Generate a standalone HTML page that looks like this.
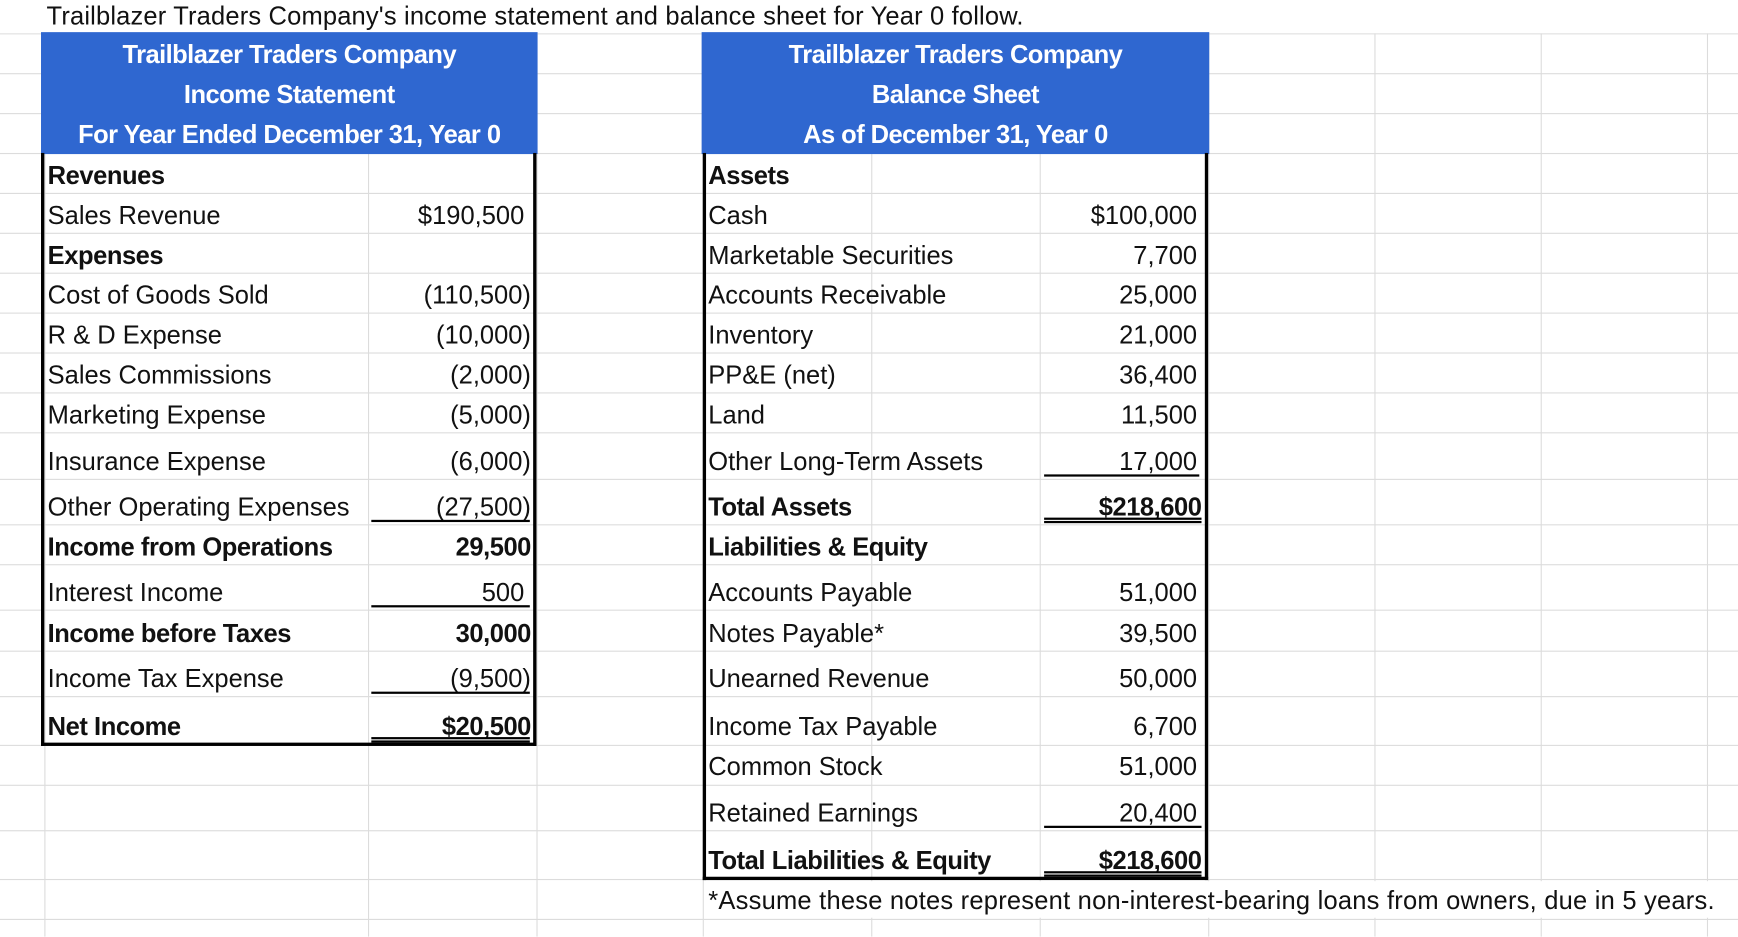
<!DOCTYPE html>
<html><head><meta charset="utf-8"><style>
html,body{margin:0;padding:0;background:#fff;overflow:hidden;width:1738px;height:936px}
#w{position:absolute;left:0;top:0;width:1568px;height:845px;transform:scale(1.1084);transform-origin:0 0;font-family:"Liberation Sans Narrow","Liberation Sans",sans-serif;font-size:23px;color:#111}
.v{position:absolute;top:0;height:845px;width:1px;background:#dcdcdc}
.h{position:absolute;left:0;width:1568px;height:1px;background:#dcdcdc}
.t{position:absolute;white-space:nowrap;line-height:26px}
.r{text-align:right}
.b{font-weight:bold;letter-spacing:-0.4px}
.blue{position:absolute;background:#2F67D0}
.ht{position:absolute;color:#fff;font-weight:bold;text-align:center;line-height:26px;white-space:nowrap;letter-spacing:-0.5px}
.k{position:absolute;background:#000}
.u{position:absolute;height:1.5px;background:#000}
</style></head><body><div id="w">
<div class="v" style="left:40px"></div><div class="v" style="left:332px"></div><div class="v" style="left:484px"></div><div class="v" style="left:634px"></div><div class="v" style="left:786px"></div><div class="v" style="left:938px"></div><div class="v" style="left:1090px"></div><div class="v" style="left:1240px"></div><div class="v" style="left:1390px"></div><div class="v" style="left:1540px"></div>
<div class="h" style="top:30px"></div><div class="h" style="top:66px"></div><div class="h" style="top:102px"></div><div class="h" style="top:138px"></div><div class="h" style="top:174px"></div><div class="h" style="top:210px"></div><div class="h" style="top:246px"></div><div class="h" style="top:282px"></div><div class="h" style="top:318px"></div><div class="h" style="top:354px"></div><div class="h" style="top:390px"></div><div class="h" style="top:432px"></div><div class="h" style="top:473px"></div><div class="h" style="top:509px"></div><div class="h" style="top:550px"></div><div class="h" style="top:587px"></div><div class="h" style="top:628px"></div><div class="h" style="top:672px"></div><div class="h" style="top:708px"></div><div class="h" style="top:749px"></div><div class="h" style="top:793px"></div><div class="h" style="top:829px"></div>
<div style="position:absolute;left:0;top:0;width:1568px;height:30px;background:#fff"></div>
<div class="t" style="left:42px;top:1px;letter-spacing:0.15px">Trailblazer Traders Company's income statement and balance sheet for Year 0 follow.</div>
<div class="blue" style="left:37px;top:29px;width:448px;height:110px"></div>
<div class="blue" style="left:633px;top:29px;width:458px;height:110px"></div>
<div class="ht" style="left:37px;width:448px;top:36px">Trailblazer Traders Company</div>
<div class="ht" style="left:37px;width:448px;top:72px">Income Statement</div>
<div class="ht" style="left:37px;width:448px;top:108px">For Year Ended December 31, Year 0</div>
<div class="ht" style="left:633px;width:458px;top:36px">Trailblazer Traders Company</div>
<div class="ht" style="left:633px;width:458px;top:72px">Balance Sheet</div>
<div class="ht" style="left:633px;width:458px;top:108px">As of December 31, Year 0</div>
<div class="k" style="left:37px;top:138px;width:3px;height:535px"></div>
<div class="k" style="left:481px;top:138px;width:3px;height:535px"></div>
<div class="k" style="left:37px;top:670px;width:447px;height:3px"></div>
<div class="k" style="left:634px;top:138px;width:3px;height:656px"></div>
<div class="k" style="left:1087px;top:138px;width:3px;height:656px"></div>
<div class="k" style="left:634px;top:791px;width:456px;height:3px"></div>
<div class="t b" style="left:43px;top:145px">Revenues</div>
<div class="t" style="left:43px;top:181px">Sales Revenue</div><div class="t r" style="right:1095px;top:181px">$190,500</div>
<div class="t b" style="left:43px;top:217px">Expenses</div>
<div class="t" style="left:43px;top:253px">Cost of Goods Sold</div><div class="t r" style="right:1089px;top:253px">(110,500)</div>
<div class="t" style="left:43px;top:289px">R &amp; D Expense</div><div class="t r" style="right:1089px;top:289px">(10,000)</div>
<div class="t" style="left:43px;top:325px">Sales Commissions</div><div class="t r" style="right:1089px;top:325px">(2,000)</div>
<div class="t" style="left:43px;top:361px">Marketing Expense</div><div class="t r" style="right:1089px;top:361px">(5,000)</div>
<div class="t" style="left:43px;top:403px">Insurance Expense</div><div class="t r" style="right:1089px;top:403px">(6,000)</div>
<div class="t" style="left:43px;top:444px">Other Operating Expenses</div><div class="t r" style="right:1089px;top:444px">(27,500)</div>
<div class="u" style="left:335px;top:469px;width:143px"></div>
<div class="t b" style="left:43px;top:480px">Income from Operations</div><div class="t r b" style="right:1089px;top:480px">29,500</div>
<div class="t" style="left:43px;top:521px">Interest Income</div><div class="t r" style="right:1095px;top:521px">500</div>
<div class="u" style="left:335px;top:546px;width:143px"></div>
<div class="t b" style="left:43px;top:558px">Income before Taxes</div><div class="t r b" style="right:1089px;top:558px">30,000</div>
<div class="t" style="left:43px;top:599px">Income Tax Expense</div><div class="t r" style="right:1089px;top:599px">(9,500)</div>
<div class="u" style="left:335px;top:624px;width:143px"></div>
<div class="t b" style="left:43px;top:642px">Net Income</div><div class="t r b" style="right:1089px;top:642px">$20,500</div>
<div class="u" style="left:335px;top:665px;width:143px"></div><div class="u" style="left:335px;top:668px;width:143px"></div>
<div class="t b" style="left:639px;top:145px">Assets</div>
<div class="t" style="left:639px;top:181px">Cash</div><div class="t r" style="right:488px;top:181px">$100,000</div>
<div class="t" style="left:639px;top:217px">Marketable Securities</div><div class="t r" style="right:488px;top:217px">7,700</div>
<div class="t" style="left:639px;top:253px">Accounts Receivable</div><div class="t r" style="right:488px;top:253px">25,000</div>
<div class="t" style="left:639px;top:289px">Inventory</div><div class="t r" style="right:488px;top:289px">21,000</div>
<div class="t" style="left:639px;top:325px">PP&amp;E (net)</div><div class="t r" style="right:488px;top:325px">36,400</div>
<div class="t" style="left:639px;top:361px">Land</div><div class="t r" style="right:488px;top:361px">11,500</div>
<div class="t" style="left:639px;top:403px">Other Long-Term Assets</div><div class="t r" style="right:488px;top:403px">17,000</div>
<div class="u" style="left:942px;top:428px;width:140px"></div>
<div class="t b" style="left:639px;top:444px">Total Assets</div><div class="t r b" style="right:484px;top:444px">$218,600</div>
<div class="u" style="left:942px;top:467px;width:142px"></div><div class="u" style="left:942px;top:470px;width:142px"></div>
<div class="t b" style="left:639px;top:480px">Liabilities &amp; Equity</div>
<div class="t" style="left:639px;top:521px">Accounts Payable</div><div class="t r" style="right:488px;top:521px">51,000</div>
<div class="t" style="left:639px;top:558px">Notes Payable*</div><div class="t r" style="right:488px;top:558px">39,500</div>
<div class="t" style="left:639px;top:599px">Unearned Revenue</div><div class="t r" style="right:488px;top:599px">50,000</div>
<div class="t" style="left:639px;top:642px">Income Tax Payable</div><div class="t r" style="right:488px;top:642px">6,700</div>
<div class="t" style="left:639px;top:678px">Common Stock</div><div class="t r" style="right:488px;top:678px">51,000</div>
<div class="t" style="left:639px;top:720px">Retained Earnings</div><div class="t r" style="right:488px;top:720px">20,400</div>
<div class="u" style="left:942px;top:745px;width:142px"></div>
<div class="t b" style="left:639px;top:763px">Total Liabilities &amp; Equity</div><div class="t r b" style="right:484px;top:763px">$218,600</div>
<div class="u" style="left:942px;top:786px;width:142px"></div><div class="u" style="left:942px;top:789px;width:142px"></div>
<div style="position:absolute;left:637px;top:795px;width:930px;height:33px;background:#fff"></div>
<div class="t" style="left:639px;top:799px;letter-spacing:0.2px">*Assume these notes represent non-interest-bearing loans from owners, due in 5 years.</div>
</div></body></html>
